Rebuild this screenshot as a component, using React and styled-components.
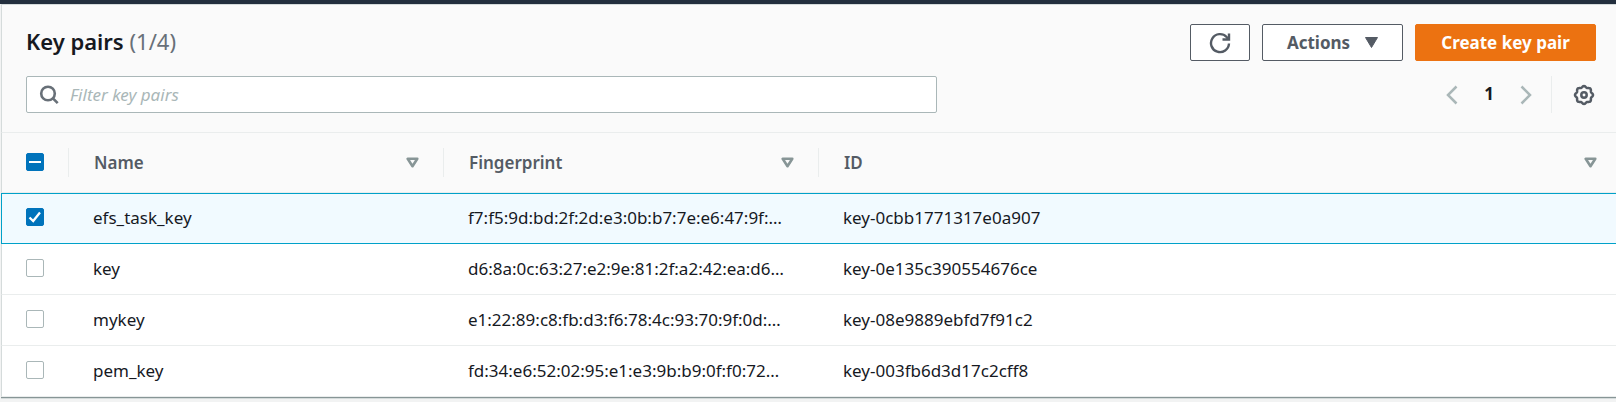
import React, { useEffect, useRef, useState } from "react";
import styled, { createGlobalStyle, css } from "styled-components";

const GlobalStyle = createGlobalStyle`
  * { box-sizing: border-box; }
  body {
    margin: 0;
    background: #ffffff;
    color: #16191f;
    font-family: "Noto Sans", "Open Sans", sans-serif;
    font-size: 17px;
    line-height: 24px;
  }
  button, input { font: inherit; color: inherit; }
`;

const Page = styled.div`
  background: #f2f3f3;
  border-top: 4px solid #232f3e;
  padding: 0 0 4px 1px;
`;

const Panel = styled.section`
  background: #ffffff;
  border-top: 1px solid #d5dbdb;
  border-bottom: 1px solid #879596;
  box-shadow: 0 1px 0 #d5dbdb;
`;

const Toolbar = styled.header`
  display: flex;
  flex-direction: column;
  gap: 15px;
  padding: 19px 20px 19px 24px;
  background: #fafafa;
  border-left: 1px solid #d5dbdb;
  border-bottom: 1px solid #eaeded;
`;

const ToolbarRow = styled.div`
  display: flex;
  align-items: center;
  justify-content: space-between;
`;

const Title = styled.h2`
  margin: 0;
  padding-bottom: 3px;
  font-size: 22px;
  line-height: 32px;
  font-weight: 600;
`;

const Count = styled.span`
  font-weight: 400;
  color: #687078;
`;

const ButtonGroup = styled.div`
  display: flex;
  gap: 12px;
`;

const Button = styled.button`
  display: flex;
  align-items: center;
  justify-content: center;
  gap: 15px;
  height: 37px;
  min-width: ${(p) => p.$width};
  padding: 0 18px;
  border: 1px solid ${(p) => (p.$primary ? "#ec7211" : "#545b64")};
  border-radius: 2px;
  background: ${(p) => (p.$primary ? "#ec7211" : "#ffffff")};
  color: ${(p) => (p.$primary ? "#ffffff" : "#545b64")};
  font-size: 17px;
  font-weight: 700;
  white-space: nowrap;
  cursor: pointer;
`;

const SearchBox = styled.label`
  display: flex;
  align-items: center;
  gap: 11px;
  width: 58%;
  height: 37px;
  padding: 0 12px;
  background: #ffffff;
  border: 1px solid #aab7b8;
  border-radius: 2px;
  color: #687078;
`;

const SearchInput = styled.input`
  flex: 1;
  min-width: 0;
  padding: 0;
  border: 0;
  outline: 0;
  background: transparent;
  color: #16191f;
  &::placeholder {
    color: #aab7b8;
    font-style: italic;
    opacity: 1;
  }
`;

const Pager = styled.nav`
  display: flex;
  align-items: center;
  height: 37px;
`;

const IconButton = styled.button`
  display: flex;
  padding: 0;
  border: 0;
  background: transparent;
  color: ${(p) => (p.$muted ? "#aab7b8" : "#545b64")};
  cursor: pointer;
`;

const PageButton = styled.button`
  width: 62px;
  padding: 0 0 2px;
  border: 0;
  background: transparent;
  color: #16191f;
  font-size: 17px;
  font-weight: 700;
`;

const Settings = styled.div`
  display: flex;
  align-items: center;
  height: 37px;
  margin-left: 19px;
  padding: 0 1px 0 21px;
  border-left: 1px solid #eaeded;
`;

const Table = styled.table`
  width: 100%;
  table-layout: fixed;
  border-collapse: separate;
  border-spacing: 0;
`;

const Col = styled.col`
  width: ${(p) => p.$width};
`;

const HeadCell = styled.th`
  height: 60px;
  padding: 0;
  background: #fafafa;
  border-bottom: 1px solid #eaeded;
  text-align: left;
  font-weight: 600;
  color: #545b64;
  &:first-child { border-left: 1px solid #d5dbdb; }
`;

const HeadInner = styled.div`
  display: flex;
  align-items: center;
  justify-content: space-between;
  height: 29px;
  padding: 0 ${(p) => (p.$last ? "19px" : "24px")} 0 25px;
  border-right: ${(p) => (p.$last ? "0" : "1px solid #eaeded")};
`;

const SelectAll = styled.div`
  display: flex;
  align-items: center;
  height: 29px;
  padding-left: 24px;
  border-right: 1px solid #eaeded;
`;

const Cell = styled.td`
  height: 51px;
  padding: 0 24px;
  border-bottom: 1px solid #eaeded;
  overflow: hidden;
  text-overflow: ellipsis;
  white-space: nowrap;
  &:first-child { border-left: 1px solid #d5dbdb; }
`;

const Row = styled.tr`
  ${(p) =>
    p.$selected &&
    css`
      & > ${Cell} {
        padding-bottom: 2px;
        background: #f1faff;
        border-top: 1px solid #00a1c9;
        border-bottom: 1px solid #00a1c9;
      }
      & > ${Cell}:first-child { border-left: 1px solid #00a1c9; }
    `}
`;

const CheckWrap = styled.span`
  position: relative;
  display: block;
  width: 18px;
  height: 18px;
  margin-bottom: 2px;
`;

const CheckInput = styled.input`
  appearance: none;
  display: block;
  width: 18px;
  height: 18px;
  margin: 0;
  border: 1px solid #aab7b8;
  border-radius: 2px;
  background: #ffffff;
  &:checked, &:indeterminate {
    background: #0073bb;
    border-color: #0073bb;
  }
`;

const CheckMark = styled.svg`
  position: absolute;
  inset: 0;
  pointer-events: none;
`;

function Checkbox({ label, checked, indeterminate = false, onChange }) {
  const ref = useRef(null);
  useEffect(() => {
    ref.current.indeterminate = indeterminate;
  }, [indeterminate]);
  return (
    <CheckWrap>
      <CheckInput ref={ref} type="checkbox" aria-label={label} checked={checked} onChange={onChange} />
      {(checked || indeterminate) && (
        <CheckMark width="18" height="18" viewBox="0 0 18 18" fill="none" stroke="#fff" aria-hidden="true">
          {indeterminate ? (
            <path d="M3 9H15" strokeWidth="2" />
          ) : (
            <path d="M3.5 9.5L7.2 13L14 4.5" strokeWidth="2.3" />
          )}
        </CheckMark>
      )}
    </CheckWrap>
  );
}

const RefreshIcon = () => (
  <svg width="22" height="22" viewBox="0 0 22 22" fill="none" stroke="currentColor" strokeWidth="2.4" aria-hidden="true">
    <path d="M20 11.5A9 9 0 1 1 17.6 5L19 6.8" />
    <path d="M20 1.5V7.5H13.5" />
  </svg>
);

const CaretIcon = () => (
  <svg width="13" height="11" viewBox="0 0 13 11" fill="currentColor" aria-hidden="true">
    <path d="M0.5 0.5H12.5L6.5 10.5Z" stroke="currentColor" strokeLinejoin="round" />
  </svg>
);

const SearchIcon = () => (
  <svg width="20" height="20" viewBox="0 0 20 20" fill="none" stroke="currentColor" strokeWidth="2.6" aria-hidden="true">
    <circle cx="9" cy="8.5" r="6.8" />
    <path d="M13.7 13.2L18.7 18.2" />
  </svg>
);

const ChevronIcon = ({ right }) => (
  <svg width="12" height="20" viewBox="0 0 12 20" fill="none" stroke="currentColor" strokeWidth="2.5" aria-hidden="true">
    <path d={right ? "M1.5 1.5L10 10L1.5 18.5" : "M10.5 1.5L2 10L10.5 18.5"} />
  </svg>
);

const gearPath = () => {
  const points = [];
  for (let i = 0; i <= 96; i += 1) {
    const a = (i / 96) * Math.PI * 2;
    const r = 8.3 + 0.7 * Math.cos(a * 8);
    points.push(`${(11 + r * Math.sin(a)).toFixed(2)} ${(11 - r * Math.cos(a)).toFixed(2)}`);
  }
  return `M${points.join("L")}Z`;
};

const GearIcon = () => (
  <svg width="22" height="22" viewBox="0 0 22 22" fill="none" stroke="currentColor" strokeWidth="2.5" aria-hidden="true">
    <path d={gearPath()} strokeLinejoin="round" />
    <circle cx="11" cy="11" r="2.7" />
  </svg>
);

const SortIcon = () => (
  <svg width="13" height="11" viewBox="0 0 13 11" fill="none" stroke="currentColor" strokeWidth="2.6" strokeLinejoin="round" aria-hidden="true">
    <path d="M1.7 1.8H11.3L6.5 9.2Z" />
  </svg>
);

const SortButton = styled(IconButton)`
  color: #879596;
`;

const columns = ["Name", "Fingerprint", "ID"];

const keyPairs = [
  { name: "efs_task_key", fingerprint: "f7:f5:9d:bd:2f:2d:e3:0b:b7:7e:e6:47:9f:…", id: "key-0cbb1771317e0a907" },
  { name: "key", fingerprint: "d6:8a:0c:63:27:e2:9e:81:2f:a2:42:ea:d6…", id: "key-0e135c390554676ce" },
  { name: "mykey", fingerprint: "e1:22:89:c8:fb:d3:f6:78:4c:93:70:9f:0d:…", id: "key-08e9889ebfd7f91c2" },
  { name: "pem_key", fingerprint: "fd:34:e6:52:02:95:e1:e3:9b:b9:0f:f0:72…", id: "key-003fb6d3d17c2cff8" },
];

export default function App() {
  const [selected, setSelected] = useState(["efs_task_key"]);
  const all = selected.length === keyPairs.length;
  const toggle = (name) =>
    setSelected((s) => (s.includes(name) ? s.filter((n) => n !== name) : [...s, name]));

  return (
    <>
      <GlobalStyle />
      <Page>
        <Panel>
          <Toolbar>
            <ToolbarRow>
              <Title>
                Key pairs <Count>({selected.length}/{keyPairs.length})</Count>
              </Title>
              <ButtonGroup>
                <Button $width="60px" aria-label="Refresh"><RefreshIcon /></Button>
                <Button $width="141px">Actions <CaretIcon /></Button>
                <Button $primary $width="181px">Create key pair</Button>
              </ButtonGroup>
            </ToolbarRow>
            <ToolbarRow>
              <SearchBox>
                <SearchIcon />
                <SearchInput type="text" aria-label="Filter key pairs" placeholder="Filter key pairs" />
              </SearchBox>
              <Pager aria-label="Pagination">
                <IconButton $muted aria-label="Previous page"><ChevronIcon /></IconButton>
                <PageButton>1</PageButton>
                <IconButton $muted aria-label="Next page"><ChevronIcon right /></IconButton>
                <Settings>
                  <IconButton aria-label="Preferences"><GearIcon /></IconButton>
                </Settings>
              </Pager>
            </ToolbarRow>
          </Toolbar>
          <Table>
            <colgroup>
              <Col $width="68px" />
              <Col $width="375px" />
              <Col $width="375px" />
              <Col />
            </colgroup>
            <thead>
              <tr>
                <HeadCell scope="col">
                  <SelectAll>
                    <Checkbox
                      label="Select all key pairs"
                      checked={all}
                      indeterminate={selected.length > 0 && !all}
                      onChange={() => setSelected(all ? [] : keyPairs.map((k) => k.name))}
                    />
                  </SelectAll>
                </HeadCell>
                {columns.map((c, i) => (
                  <HeadCell key={c} scope="col">
                    <HeadInner $last={i === columns.length - 1}>
                      {c}
                      <SortButton aria-label={`Sort by ${c}`}><SortIcon /></SortButton>
                    </HeadInner>
                  </HeadCell>
                ))}
              </tr>
            </thead>
            <tbody>
              {keyPairs.map((k) => (
                <Row key={k.name} $selected={selected.includes(k.name)}>
                  <Cell>
                    <Checkbox label={`Select ${k.name}`} checked={selected.includes(k.name)} onChange={() => toggle(k.name)} />
                  </Cell>
                  <Cell>{k.name}</Cell>
                  <Cell>{k.fingerprint}</Cell>
                  <Cell>{k.id}</Cell>
                </Row>
              ))}
            </tbody>
          </Table>
        </Panel>
      </Page>
    </>
  );
}
